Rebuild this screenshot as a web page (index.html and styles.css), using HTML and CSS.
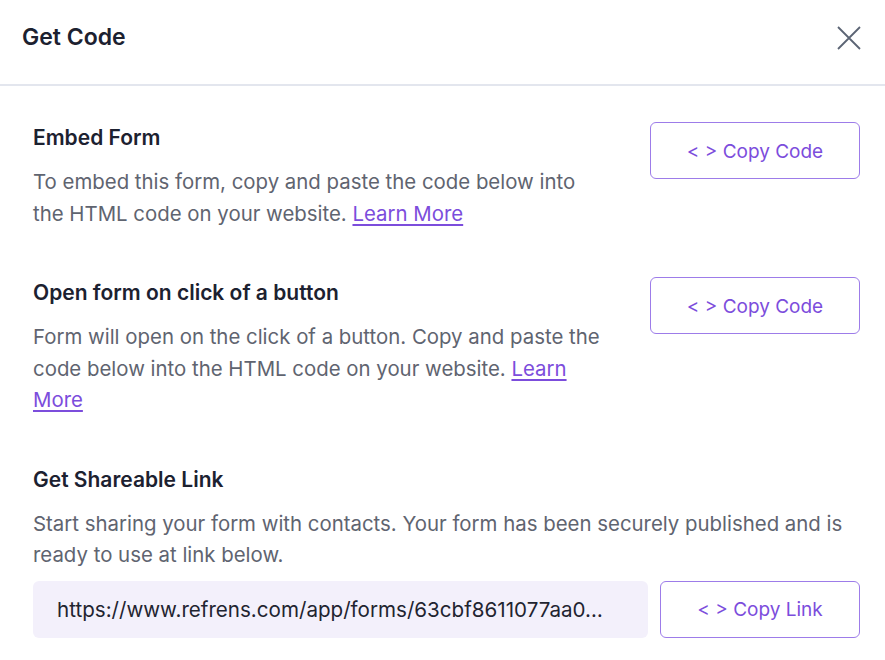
FILE: index.html
```html
<!DOCTYPE html>
<html>
<head>
<meta charset="utf-8">
<link rel="stylesheet" href="styles.css">
</head>
<body>
<div class="modal">
  <header class="modal-header">
    <h1 class="modal-title">Get Code</h1>
    <button class="close-btn" aria-label="Close">
      <svg width="24" height="24" viewBox="0 0 24 24"><path d="M1 1L23 23M23 1L1 23" stroke="#5b6474" stroke-width="1.8" fill="none"/></svg>
    </button>
  </header>
  <main class="modal-body">
    <section class="row">
      <div class="row-text">
        <h2 class="sec-title">Embed Form</h2>
        <p class="sec-desc">To embed this form, copy and paste the code below into the HTML code on your website. <a href="#" class="link">Learn More</a></p>
      </div>
      <button class="btn-outline">&lt; &gt; Copy Code</button>
    </section>
    <section class="row">
      <div class="row-text">
        <h2 class="sec-title">Open form on click of a button</h2>
        <p class="sec-desc">Form will open on the click of a button. Copy and paste the code below into the HTML code on your website. <a href="#" class="link">Learn More</a></p>
      </div>
      <button class="btn-outline">&lt; &gt; Copy Code</button>
    </section>
    <section class="share">
      <h2 class="sec-title">Get Shareable Link</h2>
      <p class="sec-desc">Start sharing your form with contacts. Your form has been securely published and is ready to use at link below.</p>
      <div class="link-row">
        <div class="link-box"><span class="link-text">https://www.refrens.com/app/forms/63cbf8611077aa0…</span></div>
        <button class="btn-outline btn-link">&lt; &gt; Copy Link</button>
      </div>
    </section>
  </main>
</div>
</body>
</html>
```
FILE: styles.css
```css
* { box-sizing: border-box; }
html, body { margin: 0; padding: 0; background: #fff; }
body { font-family: "Inter", "Liberation Sans", sans-serif; color: #1f2430; }
.modal { width: 885px; height: 660px; overflow: hidden; }
.modal-header {
  height: 86px;
  display: flex;
  align-items: center;
  justify-content: space-between;
  padding: 0 24px 10px 22px;
  border-bottom: 2px solid #e3e6ee;
}
.modal-title { margin: 0; font-size: 23px; font-weight: 600; color: #1c2130; }
.close-btn { background: none; border: 0; padding: 0; width: 24px; height: 24px; cursor: pointer; display: flex; margin-top: 2px; }
.modal-body { padding: 36px 25px 0 33px; }
.row { display: flex; justify-content: space-between; align-items: flex-start; margin-bottom: 48px; }
.row-text { width: 572px; }
.sec-title { margin: 0 0 12px; font-size: 21px; font-weight: 600; line-height: 32px; color: #1c2130; }
.sec-desc { margin: 0; font-size: 20.4px; line-height: 31.5px; color: #5f6470; }
.link { color: #7c4ddc; text-decoration: underline; text-underline-offset: 3px; }
.btn-outline {
  width: 210px; height: 57px;
  border: 1.5px solid #9d7ce9;
  border-radius: 6px;
  background: #fff;
  color: #7c4ddc;
  font-family: inherit;
  font-size: 19px;
  padding-top: 2px;
  cursor: pointer;
  flex-shrink: 0;
}
.share .sec-desc { margin-bottom: 10px; }
.link-row { display: flex; gap: 12px; }
.link-box {
  flex: 1; min-width: 0;
  height: 57px;
  background: #f3f0fb;
  border-radius: 6px;
  display: flex; align-items: center;
  padding: 0 20px 0 24px;
}
.link-text { font-size: 20.6px; color: #1f2430; white-space: nowrap; }
.btn-link { width: 200px; }
```
